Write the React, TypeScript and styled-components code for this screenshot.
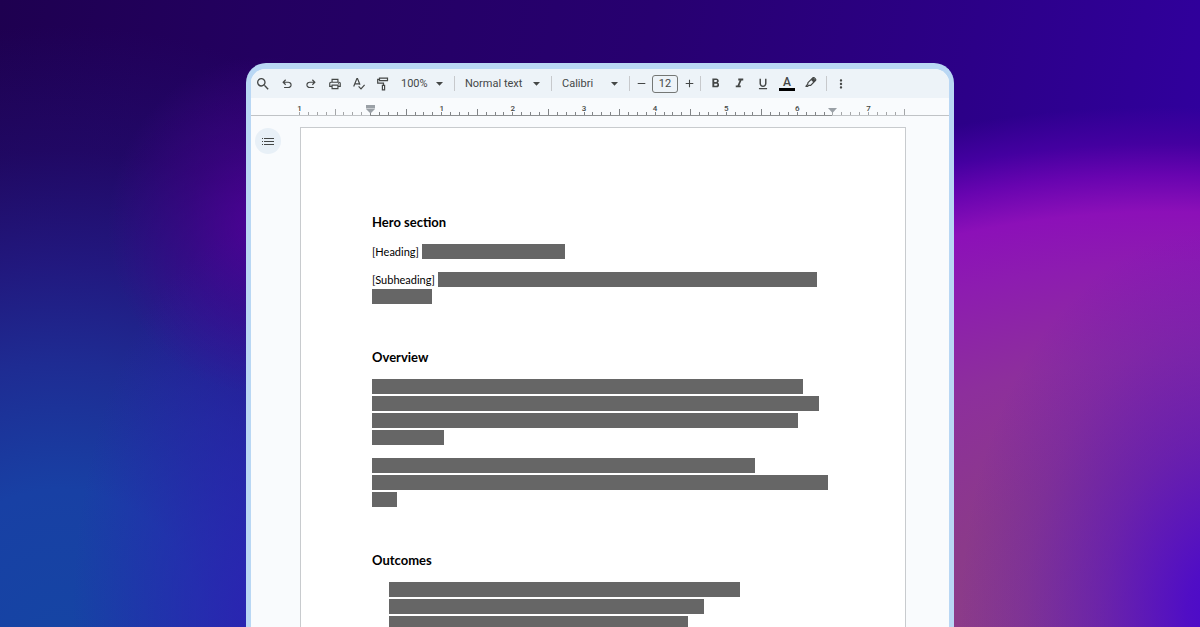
import React from "react";
import styled, { createGlobalStyle } from "styled-components";
import {
  MdSearch,
  MdFormatBold,
  MdFormatItalic,
  MdFormatUnderlined,
  MdMoreVert,
  MdAdd,
  MdRemove,
} from "react-icons/md";

const ink = "#444746";
const uiFont = `Roboto, "Liberation Sans", sans-serif`;
const docFont = `Lato, "Open Sans", sans-serif`;

const GlobalStyle = createGlobalStyle`
  *, *::before, *::after { box-sizing: border-box; }
  html, body, #root { height: 100%; }
  body { margin: 0; overflow: hidden; }
`;

const Backdrop = styled.div`
  height: 100%;
  min-height: 100%;
  display: flex;
  justify-content: center;
  padding-top: 63px;
  overflow: hidden;
  background:
    radial-gradient(22% 62% at 102% 98%, #4a08cc 0%, rgba(74, 8, 204, 0.9) 14%, rgba(74, 8, 204, 0.5) 46%, rgba(74, 8, 204, 0.2) 75%, transparent 100%),
    radial-gradient(66% 84% at 97% 101%, #8c4285 0%, #8b3a8a 30%, #8d2f9c 52%, #8d1cb0 70%, #8c10b8 80%, #6804b0 87%, #4400a0 93%, rgba(48, 0, 150, 0) 100%),
    radial-gradient(13% 27% at 22% 36%, rgba(88, 0, 160, 0.8) 0%, rgba(80, 0, 150, 0.4) 50%, transparent 100%),
    radial-gradient(16% 64% at 22% 100%, rgba(44, 34, 180, 0.95) 0%, rgba(44, 34, 180, 0.6) 40%, transparent 100%),
    radial-gradient(48% 100% at 5% 104%, #1545a4 0%, #1840a4 26%, rgba(30, 46, 150, 0.95) 46%, rgba(34, 32, 140, 0.75) 62%, rgba(34, 20, 122, 0.4) 80%, transparent 100%),
    linear-gradient(100deg, #1e0050 0%, #230060 20%, #270070 50%, #2c0088 75%, #3200a4 100%);
`;

const Window = styled.main`
  width: 59%;
  min-width: 640px;
  display: flex;
  flex-direction: column;
  border: solid #b9d7f4;
  border-width: 6px 5px 0;
  border-radius: 20px 20px 0 0;
  background: #f9fbfd;
  overflow: hidden;
`;

const Toolbar = styled.div`
  flex: none;
  height: 29px;
  display: flex;
  align-items: center;
  background: #edf3f8;
  font-family: ${uiFont};
`;

const Group = styled.div<{ $inset?: boolean }>`
  display: flex;
  align-items: center;
  padding: ${(p) => (p.$inset ? "0 3px 0 2px" : "0")};
`;

const IconButton = styled.button<{ $narrow?: boolean }>`
  width: ${(p) => (p.$narrow ? 22 : 24)}px;
  height: 24px;
  padding: 0;
  border: 0;
  display: flex;
  align-items: center;
  justify-content: center;
  background: none;
  color: ${ink};
  cursor: pointer;
`;

const Divider = styled.span`
  width: 1px;
  height: 15px;
  background: #c7c9cc;
`;

const Picker = styled.div<{ $width: number; $pad: number }>`
  position: relative;
  width: ${(p) => p.$width}px;
  display: flex;
  align-items: center;

  select {
    width: 100%;
    height: 24px;
    margin: 0;
    padding: 0 0 0 ${(p) => p.$pad}px;
    border: 0;
    appearance: none;
    background: none;
    color: ${ink};
    font: 400 11px/24px ${uiFont};
  }

  svg {
    position: absolute;
    right: 11px;
    pointer-events: none;
  }
`;

const SizeInput = styled.input`
  width: 26px;
  height: 18px;
  margin: 0;
  padding: 0;
  border: 1px solid #747775;
  border-radius: 3px;
  background: none;
  color: ${ink};
  font: 400 11px/16px ${uiFont};
  text-align: center;
`;

const ColorLetter = styled.span`
  width: 16px;
  border-bottom: 3px solid #000;
  font: 500 12px/12px ${uiFont};
  text-align: center;
`;

const RulerBar = styled.div`
  flex: none;
  height: 18px;
  padding: 0 44px 0 48px;
  display: flex;
  border-bottom: 1px solid #c0c3c6;
  font: 500 8px/8px ${uiFont};
  color: ${ink};
`;

const Tick = styled.div<{ $tall?: boolean; $faded?: boolean; $last?: boolean }>`
  position: relative;
  flex: ${(p) => (p.$last ? "0 0 1px" : "1 1 0")};
  display: flex;
  flex-direction: column;
  justify-content: flex-end;
  margin-bottom: -1px;
  border-bottom: 1px solid ${(p) => (p.$faded ? "#c0c3c6" : "#8c8f91")};

  &::after {
    content: "";
    width: 1px;
    height: ${(p) => (p.$tall ? 6 : 3)}px;
    background: ${(p) => (p.$faded ? "#a4a6a8" : "#808386")};
  }
`;

const TickLabel = styled.span`
  width: 1px;
  height: 7px;
  display: flex;
  justify-content: center;
`;

const Marker = styled.svg`
  position: absolute;
  left: -5px;
  bottom: 1px;
`;

const Workspace = styled.div`
  flex: 1;
  min-height: 0;
  display: grid;
  grid-template-columns: 49px minmax(0, 1fr) 43px;
`;

const Rail = styled.div`
  padding: 12px 0 0 4px;
`;

const OutlineButton = styled.button`
  width: 26px;
  height: 26px;
  padding: 0;
  border: 0;
  border-radius: 50%;
  display: flex;
  align-items: center;
  justify-content: center;
  background: #e8f0f7;
  color: ${ink};
`;

const Page = styled.article`
  margin-top: 11px;
  padding: 86px 70px 0 71px;
  border: 1px solid #c8cbce;
  border-bottom: 0;
  display: flex;
  flex-direction: column;
  gap: 45px;
  background: #fff;
  color: #000;
  font-family: ${docFont};
  overflow: hidden;
`;

const Section = styled.section`
  flex: none;
  display: flex;
  flex-direction: column;
  gap: 13px;
`;

const Title = styled.h2`
  margin: 0;
  font-size: 13px;
  line-height: 17px;
  font-weight: 700;
`;

const Block = styled.div<{ $indent?: boolean }>`
  display: flex;
  flex-direction: column;
  gap: 2px;
  padding-left: ${(p) => (p.$indent ? 17 : 0)}px;
`;

const Line = styled.div`
  display: flex;
  align-items: center;
  gap: 3px;
  height: 15px;
  font-size: 11px;
  line-height: 15px;
`;

const Redacted = styled.span<{ $width: number }>`
  width: ${(p) => p.$width}px;
  height: 15px;
  background: #666;
`;

const Symbol = ({ d }: { d: string }) => (
  <svg width="14" height="14" viewBox="0 -960 960 960" fill="currentColor" aria-hidden="true">
    <path d={d} />
  </svg>
);

const UNDO =
  "M280-200v-80h284q63 0 109.5-40T720-420q0-60-46.5-100T564-560H312l104 104-56 56-200-200 200-200 56 56-104 104h252q97 0 166.5 63T800-420q0 94-69.5 157T564-200H280Z";
const REDO =
  "M396-200q-97 0-166.5-63T160-420q0-94 69.5-157T396-640h252L544-744l56-56 200 200-200 200-56-56 104-104H396q-63 0-109.5 40T240-420q0 60 46.5 100T396-280h284v80H396Z";
const PRINT =
  "M640-640v-120H320v120h-80v-200h480v200h-80Zm80 180q17 0 28.5-11.5T760-500q0-17-11.5-28.5T720-540q-17 0-28.5 11.5T680-500q0 17 11.5 28.5T720-460Zm-80 260v-160H320v160h320Zm80 80H240v-160H80v-240q0-51 35-85.5t85-34.5h560q51 0 85.5 34.5T880-520v240H720v160Zm80-240v-160q0-17-11.5-28.5T760-560H200q-17 0-28.5 11.5T160-520v160h80v-80h480v80h80Z";

const SpellIcon = () => (
  <svg width="14" height="14" viewBox="0 0 14 14" fill="none" stroke="currentColor" strokeWidth="1.2" aria-hidden="true">
    <path d="M1.700 9.500 4.900 1.600h.6l2.500 6.200M2.800 6.900h4.400" />
    <path d="m6.600 9.400 2.400 2.500 3.600-4" />
  </svg>
);

const RollerIcon = () => (
  <svg width="14" height="14" viewBox="0 0 14 14" fill="none" stroke="currentColor" strokeWidth="1.2" aria-hidden="true">
    <path d="M3.500 1.200h8v2.500h-8zM3.500 2.400H1.700v3.700h5.800v2.300" />
    <path d="M6.400 8.400h2.200v4.400H6.400z" />
  </svg>
);

const HighlightIcon = () => (
  <svg width="14" height="14" viewBox="0 0 14 14" aria-hidden="true">
    <path
      d="M4 5.600 8.800.9c.5-.5 1.100-.5 1.600 0l1 1c.5.5.5 1.100 0 1.600L6.700 8.300H4.600l-.9 1H1.900l1.800-2.200z"
      fill="none"
      stroke="currentColor"
      strokeWidth="1.200"
      strokeLinejoin="round"
    />
    <path d="m6.800 2.800 2.800 2.800 2.200-2.300-2.800-2.900z" fill="currentColor" />
  </svg>
);

const ListIcon = () => (
  <svg width="12" height="9" viewBox="0 0 12 9" fill="currentColor" aria-hidden="true">
    <path d="M0 1h1v1H0zM0 4h1v1H0zM0 7h1v1H0zM2 1h10v1H2zM2 4h10v1H2zM2 7h10v1H2z" />
  </svg>
);

const Caret = () => (
  <svg width="7" height="4" viewBox="0 0 7 4" fill={ink} aria-hidden="true">
    <path d="M0 0h7L3.500 3.800z" />
  </svg>
);

const Dropdown = ({ label, value, width, pad }: { label: string; value: string; width: number; pad: number }) => (
  <Picker $width={width} $pad={pad}>
    <select aria-label={label} defaultValue={value}>
      <option>{value}</option>
    </select>
    <Caret />
  </Picker>
);

const Ruler = () => (
  <RulerBar>
    {Array.from({ length: 69 }, (_, i) => {
      const inch = i / 8 - 1;
      const labelled = i % 8 === 0 && i !== 8;
      return (
        <Tick key={i} $tall={i % 8 === 4} $faded={inch < 0 || inch >= 6.5} $last={i === 68}>
          {labelled && <TickLabel>{Math.abs(inch)}</TickLabel>}
          {i === 8 && (
            <Marker width="11" height="10" viewBox="0 0 11 10" aria-hidden="true">
              <path d="M1 1h9v3H1z" fill="#9aa0a6" />
              <path d="M1 4.500h9v.5L5.500 9.500 1 5z" fill="#9aa0a6" />
            </Marker>
          )}
          {i === 60 && (
            <Marker width="11" height="10" viewBox="0 0 11 10" aria-hidden="true">
              <path d="M1 4h9L5.500 9z" fill="#9aa0a6" />
            </Marker>
          )}
        </Tick>
      );
    })}
  </RulerBar>
);

const Bars = ({ widths, indent }: { widths: number[]; indent?: boolean }) => (
  <Block $indent={indent}>
    {widths.map((w, i) => (
      <Redacted key={i} $width={w} />
    ))}
  </Block>
);

export default function App() {
  return (
    <>
      <GlobalStyle />
      <Backdrop>
        <Window>
          <Toolbar role="toolbar" aria-label="Formatting">
            <Group>
              <IconButton aria-label="Search"><MdSearch size={16} /></IconButton>
              <IconButton aria-label="Undo"><Symbol d={UNDO} /></IconButton>
              <IconButton aria-label="Redo"><Symbol d={REDO} /></IconButton>
              <IconButton aria-label="Print"><Symbol d={PRINT} /></IconButton>
              <IconButton aria-label="Spelling"><SpellIcon /></IconButton>
              <IconButton aria-label="Paint format"><RollerIcon /></IconButton>
            </Group>
            <Dropdown label="Zoom" value="100%" width={59} pad={6} />
            <Divider />
            <Dropdown label="Style" value="Normal text" width={96} pad={10} />
            <Divider />
            <Dropdown label="Font" value="Calibri" width={77} pad={10} />
            <Divider />
            <Group>
              <IconButton $narrow aria-label="Decrease size"><MdRemove size={13} /></IconButton>
              <SizeInput aria-label="Font size" defaultValue="12" />
              <IconButton $narrow aria-label="Increase size"><MdAdd size={13} /></IconButton>
            </Group>
            <Divider />
            <Group $inset>
              <IconButton aria-label="Bold"><MdFormatBold size={15} /></IconButton>
              <IconButton aria-label="Italic"><MdFormatItalic size={15} /></IconButton>
              <IconButton aria-label="Underline"><MdFormatUnderlined size={14} /></IconButton>
              <IconButton aria-label="Text color"><ColorLetter>A</ColorLetter></IconButton>
              <IconButton aria-label="Highlight"><HighlightIcon /></IconButton>
            </Group>
            <Divider />
            <Group $inset>
              <IconButton aria-label="More"><MdMoreVert size={14} /></IconButton>
            </Group>
          </Toolbar>
          <Ruler />
          <Workspace>
            <Rail>
              <OutlineButton aria-label="Show outline"><ListIcon /></OutlineButton>
            </Rail>
            <Page>
              <Section>
                <Title>Hero section</Title>
                <Line>[Heading]<Redacted $width={143} /></Line>
                <Block>
                  <Line>[Subheading]<Redacted $width={379} /></Line>
                  <Redacted $width={60} />
                </Block>
              </Section>
              <Section>
                <Title>Overview</Title>
                <Bars widths={[431, 447, 426, 72]} />
                <Bars widths={[383, 456, 25]} />
              </Section>
              <Section>
                <Title>Outcomes</Title>
                <Bars indent widths={[351, 315, 299]} />
              </Section>
            </Page>
          </Workspace>
        </Window>
      </Backdrop>
    </>
  );
}
